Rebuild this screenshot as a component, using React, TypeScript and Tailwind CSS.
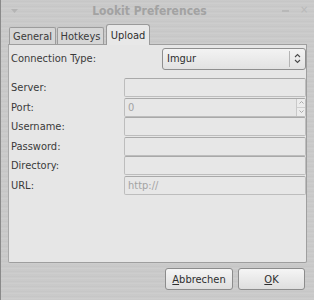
import React from 'react';

const font = { fontFamily: '"DejaVu Sans Condensed", "DejaVu Sans", sans-serif' };

const fields = ['Server:', 'Port:', 'Username:', 'Password:', 'Directory:', 'URL:'];

const Entry: React.FC<{ label: string }> = ({ label }) => {
  return (
    <div className="flex items-center h-[19px]">
      <span className="w-[113px] text-[11px] text-[#3a3a3a] leading-none">{label}</span>
      <div className="relative flex-1 h-[19px] flex items-center border border-[#bdbdbd] border-t-[#a9a9a9] bg-[#e7e7e7] rounded-[2px] pl-[3px]">
        {label === 'Port:' && <span className="text-[11px] text-[#a3a3a3] leading-none">0</span>}
        {label === 'URL:' && <span className="text-[11px] text-[#a3a3a3] leading-none">http://</span>}
        {label === 'Port:' && (
          <div className="absolute right-0 top-0 bottom-0 w-[9px] flex flex-col border-l border-[#c9c9c9] bg-[#ececec]">
            <div className="flex-1 flex items-center justify-center border-b border-[#cfcfcf]">
              <svg width="5" height="3" viewBox="0 0 5 3"><path d="M0.5 2.5 L2.5 0.5 L4.5 2.5" fill="none" stroke="#a8a8a8" strokeWidth="1" /></svg>
            </div>
            <div className="flex-1 flex items-center justify-center">
              <svg width="5" height="3" viewBox="0 0 5 3"><path d="M0.5 0.5 L2.5 2.5 L4.5 0.5" fill="none" stroke="#a8a8a8" strokeWidth="1" /></svg>
            </div>
          </div>
        )}
      </div>
    </div>
  );
};

const App: React.FC = () => {
  return (
    <div
      className="w-[314px] h-[300px] flex flex-col border-l border-[#8a8a8a] bg-[repeating-linear-gradient(180deg,#cbcbcb_0px,#c5c5c5_2px,#cfcfcf_3px,#c8c8c8_5px)] overflow-hidden"
      style={font}
    >
      {/* title bar */}
      <div className="relative h-[22px] flex items-center justify-center shrink-0 pr-[16px]">
        <svg className="absolute left-[10px] top-[9px]" width="7" height="4" viewBox="0 0 7 4">
          <path d="M0 0 L7 0 L3.5 4 Z" fill="#b4b4b4" />
        </svg>
        <span className="text-[12px] font-bold text-[#a2a2a2] leading-none">
          Lookit Preferences
        </span>
        <div className="absolute left-[281px] top-[10px] w-[7px] h-[2px] bg-[#b8b8b8]" />
        <span className="absolute left-[299px] top-[4px] text-[11px] text-[#b8b8b8] leading-none">×</span>
      </div>

      <div className="flex flex-col px-[7px]">
        {/* tabs */}
        <div className="flex items-end h-[22px] pl-[1px] gap-[1px]">
          <div className="w-[47px] h-[17px] flex items-center justify-center border border-b-0 border-[#9c9c9c] bg-[#d6d6d6] rounded-t-[2px] text-[11px] text-[#3a3a3a] leading-none">
            General
          </div>
          <div className="w-[47px] h-[17px] flex items-center justify-center border border-b-0 border-[#9c9c9c] bg-[#d6d6d6] rounded-t-[2px] text-[11px] text-[#3a3a3a] leading-none">
            Hotkeys
          </div>
          <div className="relative -mb-px z-10 w-[44px] h-[21px] ml-[1px] flex items-center justify-center border border-b-0 border-[#9a9a9a] bg-[#e8e8e8] rounded-t-[3px] text-[11px] text-[#2e2e2e] leading-none">
            Upload
          </div>
        </div>

        {/* panel */}
        <div className="h-[219px] flex flex-col border border-[#9e9e9e] border-l-[#a8a8a8] bg-[#e6e6e6] rounded-b-[2px] pl-[2px] pr-0 pt-[2px]">
          <div className="flex items-center h-[23px]">
            <span className="w-[151px] text-[11px] text-[#3a3a3a] leading-none">Connection Type:</span>
            <div className="flex-1 h-[22px] flex items-center border border-[#8f8f8f] rounded-[3px] bg-[linear-gradient(180deg,#f3f3f3,#e2e2e2)]">
              <span className="flex-1 pl-[4px] text-[11px] text-[#2e2e2e] leading-none">Imgur</span>
              <div className="w-px h-[16px] bg-[#b4b4b4]" />
              <div className="w-[15px] flex items-center justify-center">
                <svg width="7" height="11" viewBox="0 0 7 11">
                  <path d="M1 4 L3.5 1.5 L6 4 M1 7 L3.5 9.5 L6 7" fill="none" stroke="#4a4a4a" strokeWidth="1.1" />
                </svg>
              </div>
            </div>
          </div>

          <div className="flex flex-col gap-[0.5px] mt-[8px]">
            {fields.map((f) => (
              <Entry key={f} label={f} />
            ))}
          </div>
        </div>

        {/* buttons */}
        <div className="flex justify-end gap-[5px] mt-[5px] pr-[2px]">
          <button className="w-[68px] h-[22px] flex items-center justify-center border border-[#8c8c8c] rounded-[3px] bg-[linear-gradient(180deg,#f5f5f5,#dedede)] text-[11px] text-[#2e2e2e] leading-none">
            <span className="underline">A</span>bbrechen
          </button>
          <button className="w-[67px] h-[22px] flex items-center justify-center border border-[#8c8c8c] rounded-[3px] bg-[linear-gradient(180deg,#f5f5f5,#dedede)] text-[11px] text-[#2e2e2e] leading-none">
            <span className="underline">O</span>K
          </button>
        </div>
      </div>
    </div>
  );
};

export default App;
